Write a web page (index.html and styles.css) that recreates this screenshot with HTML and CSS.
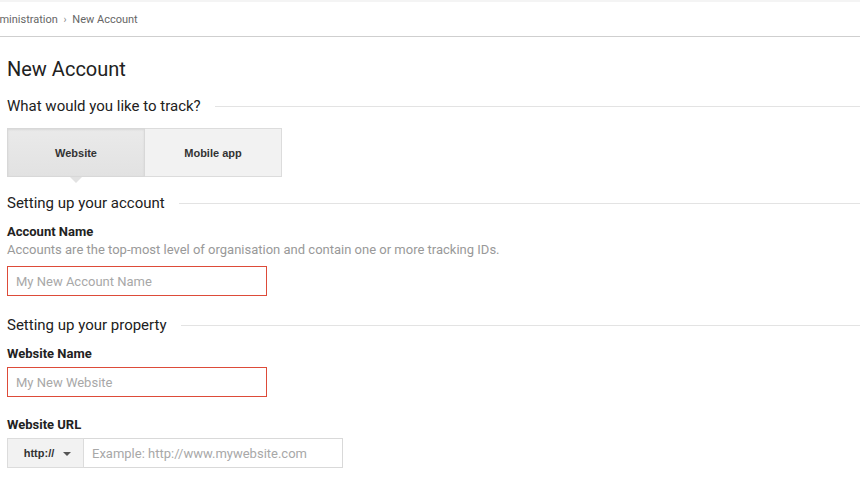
FILE: index.html
```html
<!DOCTYPE html>
<html lang="en">
<head>
    <meta charset="UTF-8">
    <title>New Account</title>
    <link rel="stylesheet" href="styles.css">
</head>
<body>
    <div class="header">
        <div class="breadcrumb">
            <span class="crumb">Administration</span>
            <span class="crumb-sep">›</span>
            <span class="crumb">New Account</span>
        </div>
    </div>

    <div class="content">
        <h1 class="page-title">New Account</h1>

        <h2 class="section-title">What would you like to track?</h2>
        <div class="tabs">
            <button class="tab active">Website</button>
            <button class="tab">Mobile app</button>
        </div>

        <h2 class="section-title">Setting up your account</h2>
        <div class="field">
            <label class="field-label" for="account-name">Account Name</label>
            <div class="field-help">Accounts are the top-most level of organisation and contain one or more tracking IDs.</div>
            <input type="text" id="account-name" class="text-input error" placeholder="My New Account Name">
        </div>

        <h2 class="section-title property">Setting up your property</h2>
        <div class="field">
            <label class="field-label" for="website-name">Website Name</label>
            <input type="text" id="website-name" class="text-input error" placeholder="My New Website">
        </div>

        <div class="field url-field">
            <label class="field-label" for="website-url">Website URL</label>
            <div class="url-group">
                <button class="protocol">http://<span class="caret"></span></button>
                <input type="text" id="website-url" class="text-input url-input" placeholder="Example: http://www.mywebsite.com">
            </div>
        </div>
    </div>
</body>
</html>
```

FILE: styles.css
```css
body {
    margin: 0;
    font-family: Roboto, 'Liberation Sans', Arial, sans-serif;
    color: #212121;
    background-color: #fff;
    overflow: hidden;
}

.header {
    height: 34px;
    border-top: 2px solid #f4f4f4;
    border-bottom: 1px solid #cfcfcf;
    display: flex;
    align-items: center;
}

.breadcrumb {
    margin-left: -14px;
    font-size: 11px;
    color: #666;
}

.crumb-sep {
    margin: 0 3px;
    font-size: 10px;
    color: #888;
}

.content {
    padding-left: 7px;
}

.page-title {
    margin: 20px 0 0;
    font-size: 20px;
    font-weight: 400;
    line-height: 24px;
}

.section-title {
    display: flex;
    align-items: center;
    margin: 15px 0 0;
    font-size: 15px;
    font-weight: 400;
    line-height: 20px;
    color: #212121;
}

.section-title::after {
    content: '';
    flex: 1;
    margin-left: 14px;
    border-top: 1px solid #e3e3e3;
}

.tabs {
    display: flex;
    margin: 12px 0 16px;
    width: 275px;
}

.tab {
    position: relative;
    flex: 1;
    height: 49px;
    border: 1px solid #dcdcdc;
    background-color: #f2f2f2;
    font-family: 'Liberation Sans', Arial, sans-serif;
    font-size: 11px;
    font-weight: 700;
    color: #333;
    cursor: pointer;
}

.tab + .tab {
    border-left: none;
}

.tab.active {
    background: linear-gradient(#eaeaea, #e2e2e2);
    border-color: #d8d8d8;
    box-shadow: inset 0 1px 2px rgba(0, 0, 0, 0.08);
    flex: 0 0 138px;
}

.tab.active::after {
    content: '';
    position: absolute;
    left: 50%;
    bottom: -7px;
    margin-left: -6px;
    border-left: 6px solid transparent;
    border-right: 6px solid transparent;
    border-top: 6px solid #e2e2e2;
}

.section-title + .field {
    margin-top: 11px;
}

.section-title.property {
    margin-top: 19px;
}

.field-label {
    display: block;
    font-size: 13px;
    font-weight: 700;
    line-height: 16px;
    color: #222;
}

.field-help {
    margin-top: 2px;
    font-size: 13px;
    line-height: 16px;
    color: #999;
}

.text-input {
    display: block;
    box-sizing: border-box;
    width: 260px;
    height: 30px;
    padding: 0 8px;
    border: 1px solid #d9d9d9;
    font-family: Roboto, 'Liberation Sans', Arial, sans-serif;
    font-size: 13px;
    color: #222;
    outline: none;
}

.text-input::placeholder {
    color: #a8a8a8;
}

.text-input.error {
    border-color: #dd4b39;
}

.field-help + .text-input {
    margin-top: 8px;
}

.field-label + .text-input {
    margin-top: 5px;
}

.url-field {
    margin-top: 20px;
}

.url-group {
    display: flex;
    margin-top: 5px;
}

.protocol {
    box-sizing: border-box;
    width: 77px;
    height: 30px;
    padding-left: 10px;
    border: 1px solid #dcdcdc;
    background-color: #f2f2f2;
    font-family: 'Liberation Sans', Arial, sans-serif;
    font-size: 11px;
    font-weight: 700;
    color: #333;
    cursor: pointer;
}

.caret {
    display: inline-block;
    margin-left: 9px;
    vertical-align: middle;
    border-left: 4px solid transparent;
    border-right: 4px solid transparent;
    border-top: 4px solid #555;
}

.url-input {
    width: 259px;
    border-left: none;
}
```
